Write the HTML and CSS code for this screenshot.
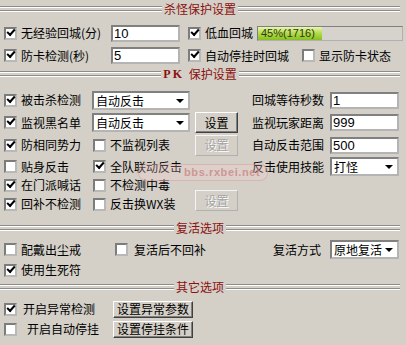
FILE: index.html
```html
<!DOCTYPE html>
<html lang="zh-CN">
<head>
    <meta charset="utf-8">
    <title>保护设置</title>
    <link rel="stylesheet" href="styles.css">
</head>
<body>
    <div class="panel">
        <div class="title first">杀怪保护设置</div>
        <div class="grid sec1">
            <div class="opt"><span class="chk on"></span>无经验回城(分)</div>
            <div class="cell"><div class="field">10</div></div>
            <div class="opt"><span class="chk on"></span>低血回城</div>
            <div class="cell">
                <div class="bar"><div class="bar-fill" style="width:64px"></div><span class="bar-text">45%(1716)</span></div>
            </div>
            <div class="opt"><span class="chk on"></span>防卡检测(秒)</div>
            <div class="cell"><div class="field">5</div></div>
            <div class="opt span2"><span class="chk on"></span>自动停挂时回城<span class="chk gap"></span>显示防卡状态</div>
        </div>

        <div class="title"><span class="pk">PK</span>&nbsp;保护设置</div>
        <div class="grid sec2">
            <div class="opt"><span class="chk on"></span>被击杀检测</div>
            <div class="cell"><div class="combo w98">自动反击</div></div>
            <div class="cell"></div>
            <div class="opt">回城等待秒数</div>
            <div class="cell"><div class="field">1</div></div>

            <div class="opt"><span class="chk on"></span>监视黑名单</div>
            <div class="cell"><div class="combo w98">自动反击</div></div>
            <div class="cell"><div class="btn small">设置</div></div>
            <div class="opt">监视玩家距离</div>
            <div class="cell"><div class="field">999</div></div>

            <div class="opt"><span class="chk on"></span>防相同势力</div>
            <div class="opt inner"><span class="chk"></span>不监视列表</div>
            <div class="cell"><div class="btn small off">设置</div></div>
            <div class="opt">自动反击范围</div>
            <div class="cell"><div class="field">500</div></div>

            <div class="opt"><span class="chk"></span>贴身反击</div>
            <div class="opt inner"><span class="chk on"></span>全队联动反击</div>
            <div class="cell"></div>
            <div class="opt">反击使用技能</div>
            <div class="cell"><div class="combo w69">打怪</div></div>

            <div class="opt"><span class="chk on"></span>在门派喊话</div>
            <div class="opt inner"><span class="chk"></span>不检测中毒</div>
            <div class="cell"></div>
            <div class="cell"></div>
            <div class="cell"></div>

            <div class="opt"><span class="chk on"></span>回补不检测</div>
            <div class="opt inner"><span class="chk"></span>反击换WX装</div>
            <div class="cell"><div class="btn small off raise">设置</div></div>
        </div>

        <div class="title">复活选项</div>
        <div class="grid sec3">
            <div class="opt"><span class="chk"></span>配戴出尘戒</div>
            <div class="opt"><span class="chk wide"></span>复活后不回补</div>
            <div class="opt">复活方式</div>
            <div class="cell"><div class="combo w69">原地复活</div></div>
            <div class="opt"><span class="chk on"></span>使用生死符</div>
        </div>

        <div class="title">其它选项</div>
        <div class="grid sec4">
            <div class="opt"><span class="chk on wide"></span>开启异常检测</div>
            <div class="cell"><div class="btn long">设置异常参数</div></div>
            <div class="opt"><span class="chk wider"></span>开启自动停挂</div>
            <div class="cell"><div class="btn long">设置停挂条件</div></div>
        </div>

        <!-- site watermark over the options -->
        <div class="mark">bbs.rxbei.net</div>
    </div>
</body>
</html>
```

FILE: styles.css
```css
* {
    box-sizing: border-box;
}
body {
    margin: 0;
    background: #d4d0c8;
    font-family: "Noto Sans CJK SC", "Liberation Sans", sans-serif;
    font-size: 12px;
    line-height: 14px;
    color: #000;
}
.panel {
    position: relative;
    width: 406px;
    height: 345px;
    overflow: hidden;
}
.title {
    display: flex;
    align-items: center;
    gap: 2px;
    width: 400px;
    height: 14px;
    color: #8b1010;
    white-space: nowrap;
}
.title.first {
    margin-top: 2px;
}
.title::before,
.title::after {
    content: "";
    flex: 1;
    height: 6px;
    background: linear-gradient(to bottom, #8c8c8c 0 1px, #fff 1px 2px, transparent 2px 4px, #8c8c8c 4px 5px, #fff 5px 6px);
}
.pk {
    font-family: "Liberation Serif", serif;
    font-weight: bold;
    font-size: 12px;
    letter-spacing: 2px;
}
.grid {
    display: grid;
    padding-left: 4px;
}
.sec1 {
    grid-template-columns: 107px 77px 69px 149px;
    grid-template-rows: 22px 23px;
    margin-top: 6px;
}
.sec2 {
    grid-template-columns: 88px 98px 62px 78px 69px;
    grid-template-rows: 22px 23px 22px 21px 16px 22px;
    margin-top: 8px;
    margin-bottom: 6px;
}
.sec3 {
    grid-template-columns: 111px 158px 57px 69px;
    grid-template-rows: 21px 20px;
    margin-top: 4px;
}
.sec4 {
    grid-template-columns: 109px 80px;
    grid-template-rows: 20px 20px;
    margin-top: 5px;
}
.cell {
    display: flex;
    align-items: center;
}
.opt {
    display: flex;
    align-items: center;
    white-space: nowrap;
}
.opt.inner {
    padding-left: 1px;
}
.span2 {
    grid-column: span 2;
}
.chk {
    position: relative;
    flex: none;
    width: 13px;
    height: 13px;
    margin-right: 4px;
    background: #fff;
    border: 2px solid;
    border-color: #7c7c7c #b8b8b8 #b8b8b8 #7c7c7c;
}
.chk.gap {
    margin-left: 13px;
}
.chk.wide {
    margin-right: 6px;
}
.chk.wider {
    margin-right: 10px;
}
.chk.on::after {
    content: "";
    position: absolute;
    left: 1px;
    top: 0;
    width: 6px;
    height: 3px;
    border-left: 2px solid #000;
    border-bottom: 2px solid #000;
    transform: rotate(-48deg);
}
.field {
    width: 69px;
    height: 17px;
    padding-left: 1px;
    background: #fff;
    border: 2px solid;
    border-color: #808080 #b4b4b4 #b4b4b4 #808080;
    font-family: "Liberation Sans", sans-serif;
    font-size: 13px;
    line-height: 13px;
}
.combo {
    position: relative;
    height: 19px;
    padding-left: 2px;
    background: #fff;
    border: 2px solid;
    border-color: #808080 #b4b4b4 #b4b4b4 #808080;
    line-height: 15px;
    white-space: nowrap;
}
.combo::after {
    content: "";
    position: absolute;
    right: 4px;
    top: 6px;
    border-left: 4px solid transparent;
    border-right: 4px solid transparent;
    border-top: 4px solid #000;
}
.w98 {
    width: 98px;
}
.w69 {
    width: 69px;
}
.bar {
    position: relative;
    width: 146px;
    height: 15px;
    border: 1px solid;
    border-color: #808080 #b0b0b0 #b0b0b0 #808080;
    background: #d6d3cc;
}
.bar-fill {
    height: 100%;
    background: linear-gradient(to bottom, #eaf7b0, #b6dc52 45%, #86c01c);
}
.bar-text {
    position: absolute;
    left: 3px;
    top: 0;
    font-family: "Liberation Sans", sans-serif;
    font-size: 11px;
    line-height: 13px;
    color: #2f3a10;
}
.btn {
    display: flex;
    align-items: center;
    justify-content: center;
    background: #d4d0c8;
    border: 1px solid;
    border-color: #fff #404040 #404040 #fff;
    box-shadow: inset -1px -1px 0 #808080;
    white-space: nowrap;
}
.btn.small {
    width: 43px;
    height: 21px;
    margin-left: 5px;
}
.btn.long {
    width: 80px;
    height: 17px;
}
.btn.off {
    color: #a4a4a4;
    text-shadow: 1px 1px 0 #fff;
    border-color: #f4f4f4 #b0b0b0 #b0b0b0 #f4f4f4;
    box-shadow: none;
}
.btn.raise {
    margin-top: -7px;
}
.mark {
    position: absolute;
    left: 138px;
    top: 164px;
    width: 130px;
    height: 17px;
    padding-left: 45px;
    border: 1px solid rgba(210, 150, 150, 0.45);
    border-radius: 8px;
    background: rgba(245, 205, 205, 0.28);
    color: rgba(200, 130, 130, 0.75);
    font-family: "Liberation Sans", sans-serif;
    font-weight: bold;
    font-size: 11px;
    line-height: 15px;
    letter-spacing: 0.6px;
    white-space: nowrap;
    pointer-events: none;
}
```
